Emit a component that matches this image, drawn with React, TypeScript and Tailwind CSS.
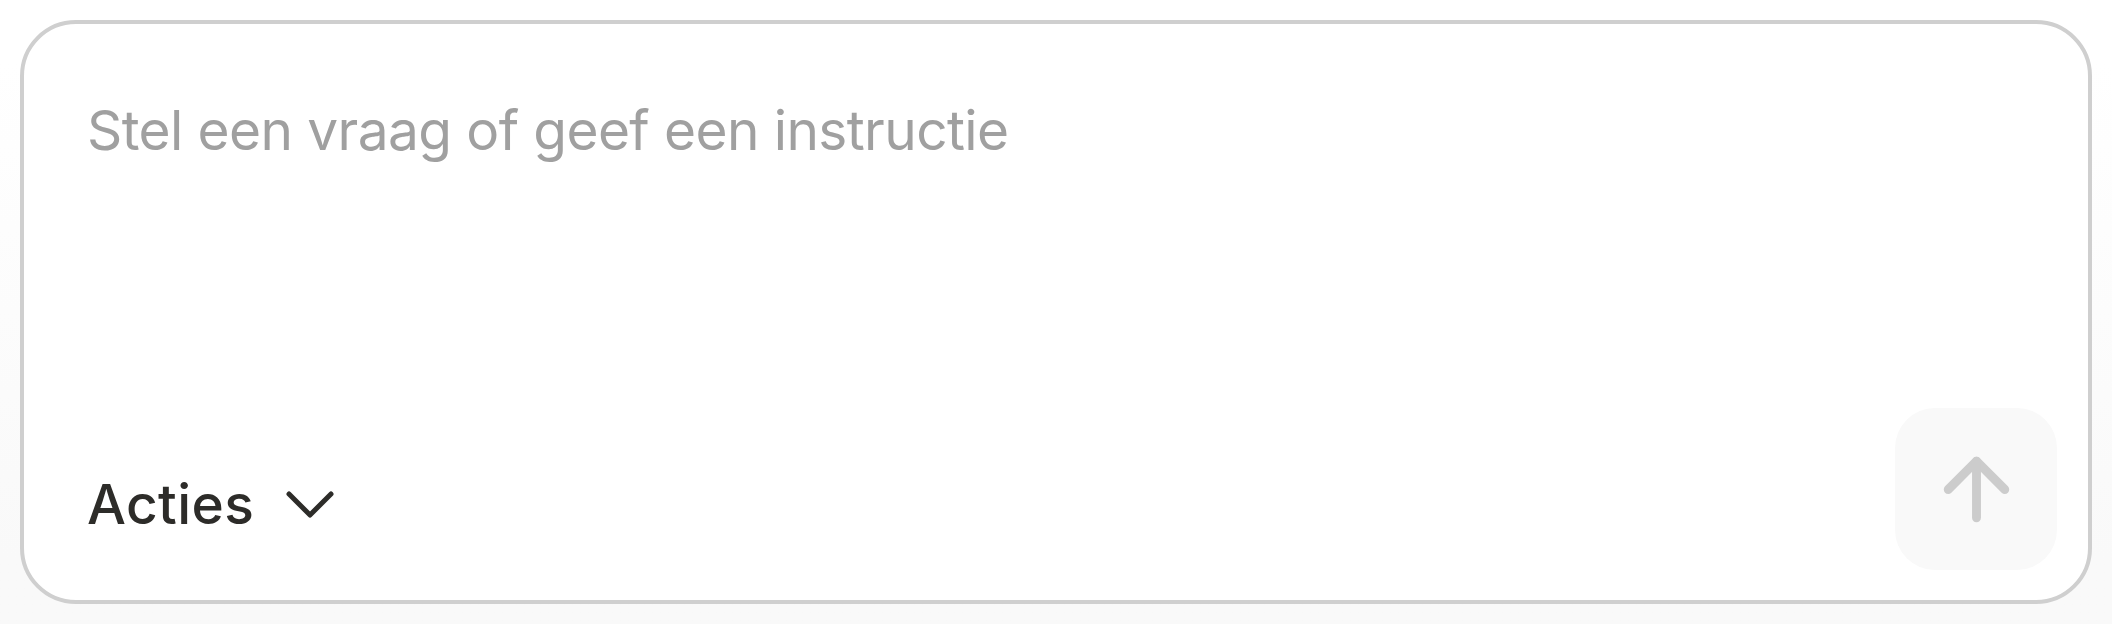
import { useState } from "react"
import { ArrowUp } from "lucide-react"

export default function App() {
  const [value, setValue] = useState("")

  return (
    <div
      className="w-[2112px] h-[624px] p-5 bg-linear-to-b from-white from-10% to-[#f9f9f9] to-90%"
      style={{ fontFamily: "Inter, 'Noto Sans', sans-serif" }}
    >
      {/* Prompt box */}
      <div className="flex flex-col h-full bg-white border-[4px] border-[#cfcfcf] rounded-[56px]">
        <textarea
          value={value}
          onChange={(e) => setValue(e.target.value)}
          placeholder="Stel een vraag of geef een instructie"
          className="flex-1 resize-none bg-transparent outline-none pt-[73px] px-[63px] text-[55px] leading-[66px] tracking-[-0.6px] text-[#2d2c29] placeholder:text-[#a0a0a0]"
        />

        {/* Bottom bar */}
        <div className="flex items-end justify-between pl-[63px] pr-[31px] pb-[30px]">
          <button type="button" className="flex items-center mb-[33px] text-[#2d2c29]">
            <span className="text-[55px] leading-[66px] font-medium tracking-[0.4px]">Acties</span>
            <svg width="50" height="30" viewBox="0 0 50 30" className="ml-[31px] mt-[2px]" fill="none">
              <polyline
                points="4,4 25,25 46,4"
                stroke="#2d2c29"
                strokeWidth="5"
                strokeLinecap="round"
                strokeLinejoin="round"
              />
            </svg>
          </button>

          <button
            type="button"
            className="flex items-center justify-center w-[162px] h-[162px] rounded-[40px] bg-[#f9f9f9]"
          >
            <ArrowUp size={97} strokeWidth={2.2} color="#cccccc" />
          </button>
        </div>
      </div>
    </div>
  )
}
